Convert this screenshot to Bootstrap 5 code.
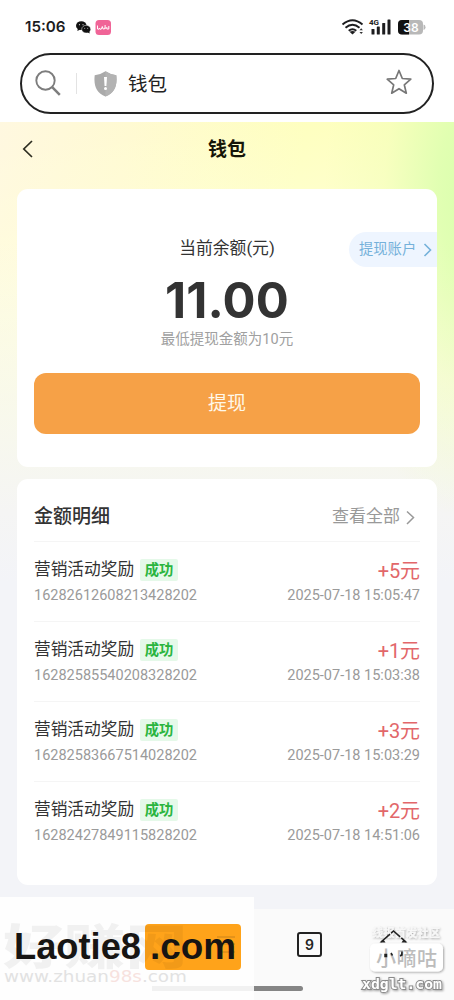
<!DOCTYPE html>
<html lang="zh-CN">
<head>
<meta charset="utf-8">
<meta name="viewport" content="width=device-width, initial-scale=1">
<title>钱包</title>
<link href="https://cdn.jsdelivr.net/npm/bootstrap@5.3.0/dist/css/bootstrap.min.css" rel="stylesheet">
<style>
body{font-family:Roboto,"Noto Sans CJK SC",sans-serif;background:#f3f4f8;color:#333;overflow:hidden;height:1000px}
svg{display:block;flex:none}
.phone{height:1000px}
.statusbar{height:53px;padding:1px 28px 0 25px}
.clock{font:600 15.2px/1 Inter,sans-serif;color:#1c1c1e;width:50px}
.top{background:#fff;height:122px}
.address{height:61px;margin:0 20px;border:2px solid #222;border-radius:31px;padding:0 20px 0 13px}
.address .sep{width:1px;height:21px;background:#e3e3e3;margin:0 17px 0 14px}
.address .site{font-size:19.5px;color:#222;line-height:1;padding-top:3px;margin-left:11px}
.star{margin-top:-3px}
.page{height:787px;background:
 radial-gradient(ellipse 150px 330px at 475px 70px,rgba(216,255,172,1) 0,rgba(220,255,174,.85) 25%,rgba(238,255,180,.4) 60%,rgba(252,255,182,0) 100%),
 linear-gradient(180deg,rgba(243,244,248,0) 0,rgba(243,244,248,0) 120px,rgba(246,247,240,.85) 310px,#f5f5f4 390px,#f3f4f8 460px),
 linear-gradient(170deg,rgba(255,255,225,0) 20px,rgba(255,255,222,.8) 200px),
 linear-gradient(100deg,#fff8e0 0,#fffad2 22%,#feffba 52%,#feffb6 75%,#fbffb6 100%)}
.titlebar{height:67px;padding:0 22px 13px}
.titlebar h1{font-size:19px;color:#161608;line-height:1;padding-top:1px}
.titlebar .spacer{width:12px}
.panel{background:#fff;border-radius:11px;margin:0 17px;position:relative}
.balance{height:278px;padding:49px 17px 0}
.balance .cap{font-size:16.8px;line-height:20px}
.amount{font:700 49px/50px Inter,sans-serif;letter-spacing:.1px;color:#333;margin-top:18px}
.minimum{font-size:14.5px;line-height:20px;color:#a0a0a0;margin-top:4px}
.withdraw{height:61px;border-radius:12px;background:#f6a147;color:#fff8ea;font-size:19px;margin-top:23px;padding-top:8px}
.withdraw:hover{background:#f09a3e;color:#fff}
.account{position:absolute;right:0;top:43px;height:35px;width:88px;border-radius:18px 0 0 18px;background:#eef5ff;color:#75b1da;font-size:14.3px;padding-left:10px;padding-top:1px;gap:7px}
.details{height:406px;margin-top:12px;padding:0 17px}
.details header{height:62px;padding-top:14px}
.details h2{font-size:19px;font-weight:500}
.more{font-size:17px;color:#999;gap:6px;padding-right:5px}
.entry{height:80px;border-top:1px solid #f5f5f5;padding-top:16px}
.entry .what{font-size:16.7px;line-height:24px}
.tag{font-size:14.3px;line-height:22px;height:22px;width:38px;background:#e5f9e9;color:#2bb540;font-weight:700;border-radius:2px;margin-left:6px;margin-top:1px}
.meta{font-size:14.5px;line-height:18px;color:#9a9a9a;margin-top:5px}
.sum + .meta{margin-top:2px}
.sum{font-size:20px;line-height:27px;color:#e2676a;letter-spacing:-.1px}
.bottombar{height:91px;background:#fafafa;position:relative}
.tabs{width:25px;height:25px;border:2px solid #222;border-radius:3px;font:600 14px/1 Inter,sans-serif;color:#222;margin-left:297px;margin-top:23px}
.homebar{position:absolute;left:152px;top:77px;width:151px;height:5px;border-radius:3px;background:#858585}
.stamp{position:absolute;left:0;bottom:0}
.stamp.end{left:auto;right:0}
</style>
</head>
<body>
<div class="phone d-flex flex-column">
 <div class="top">
  <div class="statusbar d-flex align-items-center">
   <span class="clock">15:06</span>
   <svg width="38" height="18" viewBox="75 18 38 18">
    <ellipse cx="81.300" cy="25.700" rx="5.300" ry="4.400" fill="#111"/><path d="M78 28l-.7 3 3-1.500" fill="#111"/>
    <ellipse cx="86.200" cy="29.200" rx="4.500" ry="3.900" fill="#111" stroke="#fff" stroke-width=".5"/><path d="M87 32l2.600 1.500-.3-2.500" fill="#111"/>
    <g fill="#ccc"><circle cx="79.500" cy="24.700" r=".6"/><circle cx="83" cy="24.700" r=".6"/><circle cx="84.700" cy="28.300" r=".5"/><circle cx="87.700" cy="28.300" r=".5"/></g>
    <rect x="95.500" y="20" width="15.500" height="15" rx="3.500" fill="#f06497"/>
    <path d="M97.500 25.500v3.500q2 1 2-1 0 2 2 1l.8-2.500.8 2.500q2 .5 2-1.500M105.100 25v4M106.800 27v2h2v-3" fill="none" stroke="#fff" stroke-width="1"/>
   </svg>
   <svg class="ms-auto" width="86" height="20" viewBox="340 17 86 20">
    <g fill="none" stroke="#1d1d1f" stroke-width="1.900"><path d="M342.500 24.500q10-8.500 20 0"/><path d="M345.500 27.700q7-5.900 14 0"/><path d="M348.700 30.700q3.800-3.100 7.600 0"/></g>
    <path d="M349.500 31.700q3-1.600 6 0l-3 2.800z" fill="#1d1d1f"/>
    <path d="M359.500 30.300l1.700-2 1.700 2zM359.500 32l1.700 2 1.700-2z" fill="#333"/>
    <text x="369" y="25.200" font-family="Roboto" font-size="8" font-weight="700" fill="#222">4G</text>
    <g fill="#1d1d1f"><rect x="371.500" y="29" width="3" height="5.500" rx=".6"/><rect x="376.800" y="26.500" width="3" height="8" rx=".6"/><rect x="382.200" y="23" width="3" height="11.500" rx=".6"/><rect x="387.500" y="19.500" width="3" height="15" rx=".6"/></g>
    <path d="M402 20h17a4 4 0 0 1 4 4v6.500a4 4 0 0 1-4 4h-17a4 4 0 0 1-4-4V24a4 4 0 0 1 4-4z" fill="#b8b8b8"/>
    <path d="M402 20h7v14.500h-7a4 4 0 0 1-4-4V24a4 4 0 0 1 4-4z" fill="#111"/><path d="M423.500 24.500q2 0 2 2.700t-2 2.700z" fill="#b8b8b8"/>
    <text x="411" y="31.700" font-family="Inter" font-size="12" font-weight="600" text-anchor="middle" fill="#fff">38</text>
   </svg>
  </div>
  <div class="address d-flex align-items-center">
   <svg width="27" height="27" viewBox="0 0 27 27" fill="none" stroke="#7d7d7d"><circle cx="10.500" cy="10.500" r="9.200" stroke-width="1.900"/><path d="M17.200 17.200l7.600 7.600" stroke-width="2.500"/></svg>
   <span class="sep"></span>
   <svg width="23" height="26" viewBox="0 0 23 26"><path d="M11.500.3Q16 3.500 22.300 4.200C23.500 15 20.500 22 11.500 25.600 2.500 22 -.5 15 .7 4.200Q7 3.500 11.500.3z" fill="#aaa"/><path d="M11.500.3Q16 3.500 22.300 4.200C23.500 15 20.500 22 11.500 25.600z" fill="#b3b3b3"/><path d="M10 6h3l-.6 9h-1.800z" fill="#fff"/><circle cx="11.500" cy="17.500" r="1.500" fill="#fff"/></svg>
   <span class="site">钱包</span>
   <svg class="star ms-auto" width="26" height="26" viewBox="0 0 26 26" fill="none" stroke="#777" stroke-width="1.700" stroke-linejoin="round"><path d="M13 1.500l3.300 8 8.500.7-6.500 5.600 2 8.400L13 19.700l-7.300 4.500 2-8.400-6.500-5.600 8.500-.7z"/></svg>
  </div>
 </div>

 <main class="page">
  <div class="titlebar d-flex align-items-center justify-content-between">
   <svg width="12" height="18" viewBox="0 0 12 18" fill="none" stroke="#2d2d20" stroke-width="1.700"><path d="M10 1L1.800 9 10 17"/></svg>
   <h1 class="fw-bold m-0">钱包</h1>
   <span class="spacer"></span>
  </div>
  <section class="panel balance text-center">
   <div class="cap">当前余额(元)</div>
   <div class="amount">11.00</div>
   <div class="minimum">最低提现金额为10元</div>
   <button class="btn withdraw w-100 border-0">提现</button>
   <a class="account d-flex align-items-center text-decoration-none" href="#">提现账户
    <svg width="9" height="14" viewBox="0 0 9 14" fill="none" stroke="#75b1da" stroke-width="1.600"><path d="M1.500 1l6 6-6 6"/></svg></a>
  </section>
  <section class="panel details">
   <header class="d-flex align-items-center justify-content-between">
    <h2 class="m-0">金额明细</h2>
    <a class="more d-flex align-items-center text-decoration-none" href="#">查看全部
     <svg width="9" height="15" viewBox="0 0 9 15" fill="none" stroke="#999" stroke-width="1.500"><path d="M1 1.500l6.500 6L1 14"/></svg></a>
   </header>
   <div class="entry d-flex justify-content-between">
    <div><div class="d-flex what">营销活动奖励<span class="tag text-center">成功</span></div><div class="meta">16282612608213428202</div></div>
    <div class="text-end"><div class="sum">+5元</div><div class="meta">2025-07-18 15:05:47</div></div>
   </div>
   <div class="entry d-flex justify-content-between">
    <div><div class="d-flex what">营销活动奖励<span class="tag text-center">成功</span></div><div class="meta">16282585540208328202</div></div>
    <div class="text-end"><div class="sum">+1元</div><div class="meta">2025-07-18 15:03:38</div></div>
   </div>
   <div class="entry d-flex justify-content-between">
    <div><div class="d-flex what">营销活动奖励<span class="tag text-center">成功</span></div><div class="meta">16282583667514028202</div></div>
    <div class="text-end"><div class="sum">+3元</div><div class="meta">2025-07-18 15:03:29</div></div>
   </div>
   <div class="entry d-flex justify-content-between">
    <div><div class="d-flex what">营销活动奖励<span class="tag text-center">成功</span></div><div class="meta">16282427849115828202</div></div>
    <div class="text-end"><div class="sum">+2元</div><div class="meta">2025-07-18 14:51:06</div></div>
   </div>
  </section>
 </main>

 <footer class="bottombar d-flex align-items-start">
  <span class="tabs d-flex align-items-center justify-content-center">9</span>
  <span class="homebar"></span>
  <svg class="stamp" width="254" height="103" viewBox="0 897 254 103">
   <rect y="897" width="254" height="103" fill="#fefefe"/>
   <rect x="152" y="986" width="102" height="5" fill="#f1f1f1"/>
   <rect x="145" y="924" width="96" height="46" rx="4" fill="#ffa31a"/>
   <text x="3" y="964" font-family="Noto Sans CJK SC" font-size="48" font-weight="900" fill="#000" fill-opacity=".05" textLength="184" lengthAdjust="spacingAndGlyphs">好赚网</text>
   <text x="4" y="982" font-family="DejaVu Sans" font-size="15" fill="#e2e2e2" textLength="183" lengthAdjust="spacingAndGlyphs">www.zhuan<tspan fill="#f7e2de">98s</tspan>.com</text>
   <path d="M217 937h18M221 944h14M221 952h14" stroke="#a76e1c" stroke-width="1" opacity=".6"/>
   <g font-family="Liberation Sans" font-size="36" font-weight="700" fill="#171513"><text x="14" y="959" textLength="127" lengthAdjust="spacingAndGlyphs">Laotie8</text><text x="150" y="959" textLength="86" lengthAdjust="spacingAndGlyphs">.com</text></g>
  </svg>
  <svg class="stamp end" width="104" height="80" viewBox="350 920 104 80">
   <defs><filter id="soft" x="-10%" y="-20%" width="120%" height="150%"><feDropShadow dx="1" dy="1" stdDeviation=".9" flood-color="#000" flood-opacity=".35"/></filter></defs>
   <text x="372" y="936.500" font-family="Noto Sans CJK SC" font-size="11" font-weight="700" fill="#f7f7f7" filter="url(#soft)" textLength="68">线报首发社区</text>
   <path d="M381 942l12.500-11 12.500 11" fill="none" stroke="#222" stroke-width="1.600" stroke-dasharray="12 1.500"/>
   <path d="M379.500 942.500l4-3 2 3zM407.500 942.500l-4-3-2 3z" fill="#222"/>
   <rect x="370" y="943.500" width="73" height="28" rx="5" fill="#fff" filter="url(#soft)"/>
   <text x="376" y="966" font-family="Noto Sans CJK SC" font-size="20" font-weight="500" fill="#bcbcbc" textLength="61">小嘀咕</text>
   <path d="M385 954.500h1.500v2H385zM391 953l1.500 2.500M402 951.500v3.500l-2 1" stroke="#222" stroke-width="1.500" fill="#222"/>
   <text x="362" y="989" font-family="DejaVu Sans Mono" font-size="13.500" font-weight="700" fill="#fff" stroke="#8a8a8a" stroke-width="1.800" paint-order="stroke" filter="url(#soft)" textLength="80" lengthAdjust="spacingAndGlyphs">xdglt.com</text>
  </svg>
 </footer>
</div>
<script src="https://cdn.jsdelivr.net/npm/bootstrap@5.3.0/dist/js/bootstrap.bundle.min.js"></script>
</body>
</html>
